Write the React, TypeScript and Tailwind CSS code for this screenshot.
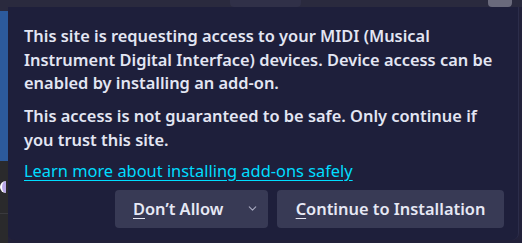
import { ChevronDown } from 'lucide-react'

function AccessKey({ label, keyChar }: { label: string; keyChar: string }) {
  const rest = label.slice(keyChar.length)
  return (
    <span>
      <span className="underline underline-offset-[3px]">{keyChar}</span>
      {rest}
    </span>
  )
}

export default function App() {
  return (
    <div
      className="w-[522px] h-[243px] overflow-hidden bg-[#22213a] flex flex-col"
      style={{ fontFamily: '"Noto Sans", "Open Sans", sans-serif' }}
    >
      {/* toolbar strip behind the panel */}
      <div className="h-[7px] flex shrink-0 bg-[#2a2a3e]">
        <div className="w-[230px]" />
        <div className="w-[71px] bg-[#303048] rounded-b-[4px]" />
        <div className="flex-1" />
        <div className="w-[24px] bg-[#6a6a7c] rounded-b-[4px]" />
        <div className="w-[10px]" />
      </div>

      <div className="flex flex-1 min-h-0">
        {/* page content peeking on the left */}
        <div className="w-[8px] flex flex-col shrink-0">
          <div className="h-[4px] bg-[#2a2a3e]" />
          <div className="h-[150px] bg-[#2c5a9c]" />
          <div className="flex-1 bg-[#2a2a2c] flex flex-col">
            <div className="h-[20px]" />
            <div className="h-[12px] w-[6px] rounded-l-full bg-[#b9a8e8] border-l-2 border-white" />
            <div className="h-[20px]" />
            <div className="h-px bg-[#3a3a3e]" />
          </div>
        </div>

        <div className="flex-1 flex flex-col">
          <div className="flex-1 bg-[#1e1f3b] rounded-b-[7px] border-r border-[#2c2d4a] pl-[16px] pr-[14px] pt-[17px] text-[16.4px] leading-[23.5px] font-semibold text-[#e3e6f3]">
            <p>
              This site is requesting access to your MIDI (Musical Instrument Digital Interface) devices. Device
              access can be enabled by installing an add-on.
            </p>
            <p className="mt-[9.5px]">
              This access is not guaranteed to be safe. Only continue if you trust this site.
            </p>
            <p className="mt-[8px]">
              <a className="text-[#00ddff] underline underline-offset-[3px] font-normal" href="#">
                Learn more about installing add-ons safely
              </a>
            </p>
            <div className="mt-[7px] flex justify-end gap-[9px]">
              <button className="h-[38px] w-[153px] rounded-[4px] bg-[#383a55] text-[#e6e8f4] font-semibold flex items-center pl-[18px] pr-[9px]">
                <span className="flex-1 text-left">
                  <AccessKey label="Don’t Allow" keyChar="D" />
                </span>
                <ChevronDown size={13} strokeWidth={2} className="text-[#a8aac0]" />
              </button>
              <button className="h-[38px] w-[227px] rounded-[4px] bg-[#383a55] text-[#e6e8f4] font-semibold flex items-center justify-center">
                <AccessKey label="Continue to Installation" keyChar="C" />
              </button>
            </div>
          </div>
          <div className="h-[3px]" />
        </div>

        <div className="w-[3px] shrink-0 bg-[#22213a]" />
      </div>
    </div>
  )
}
